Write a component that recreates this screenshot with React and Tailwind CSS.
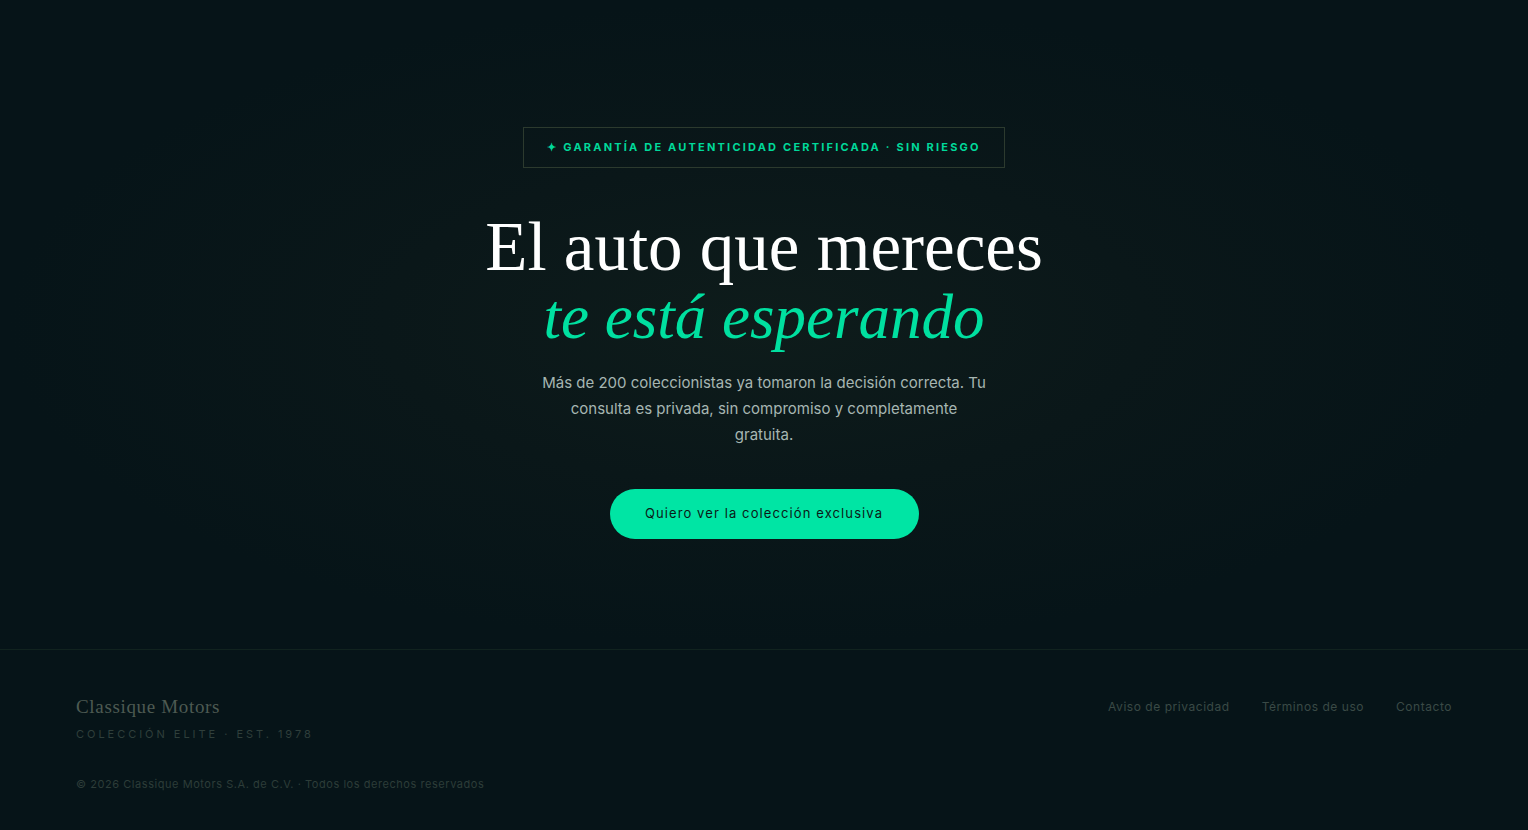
export default function App() {
  const sans = { fontFamily: "'Inter', 'Noto Sans', sans-serif" };
  const serif = { fontFamily: "'Liberation Serif', 'DejaVu Serif', serif" };
  return (
    <div className="min-h-screen bg-[#061418] text-white" style={sans}>
      <section className="relative h-[650px] border-b border-[#11231f] bg-[radial-gradient(ellipse_at_50%_50%,#0e1c1b_0%,#0a1719_35%,#061418_70%)] flex flex-col items-center pt-[127px]">
        <div className="border border-[#2c3a2e] h-[41px] px-[23px] flex items-center text-[11px] font-bold tracking-[0.2em] text-[#00d99a]">
          ✦ GARANTÍA DE AUTENTICIDAD CERTIFICADA · SIN RIESGO
        </div>

        <h1 className="mt-[44px] text-center text-white" style={serif}>
          <span className="block text-[69px] leading-[70px]">El auto que mereces</span>
          <em className="block text-[63px] leading-[70px] text-[#00e0a0]">te está esperando</em>
        </h1>

        <p className="mt-[18px] max-w-[446px] text-center text-[15px] leading-[26px] text-[#a6b6b2]">
          Más de 200 coleccionistas ya tomaron la decisión correcta. Tu consulta es privada, sin compromiso y completamente gratuita.
        </p>

        <button className="mt-[41px] h-[50px] w-[309px] rounded-full bg-[#00e5a4] text-[13px] tracking-[0.085em] text-[#0b1a17]">
          Quiero ver la colección exclusiva
        </button>
      </section>

      <footer className="px-[76px] pt-[43px] pb-[40px]">
        <div className="flex justify-between items-start">
          <div>
            <div className="text-[19px] tracking-[0.035em] text-[#4d5a52]" style={serif}>
              Classique Motors
            </div>
            <div className="mt-[4px] text-[11px] tracking-[0.27em] text-[#2f3f3b]">
              COLECCIÓN ELITE · EST. 1978
            </div>
          </div>
          <nav className="flex gap-[32px] pt-[5px] text-[12px] tracking-[0.045em] text-[#3a4a46]">
            <a>Aviso de privacidad</a>
            <a>Términos de uso</a>
            <a>Contacto</a>
          </nav>
        </div>
        <div className="mt-[34px] text-[11px] tracking-[0.05em] text-[#2d3d39]">
          © 2026 Classique Motors S.A. de C.V. · Todos los derechos reservados
        </div>
      </footer>
    </div>
  );
}
